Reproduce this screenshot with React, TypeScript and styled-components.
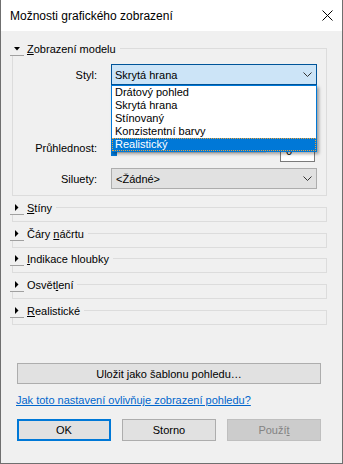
import React from "react";
import styled, { createGlobalStyle } from "styled-components";

const GlobalStyle = createGlobalStyle`
	html,
	body {
		margin: 0;
		padding: 0;
		background: #f0f0f0;
	}
	body {
		font-family: "Liberation Sans", Arial, sans-serif;
	}
`;

const Window = styled.div`
	width: 343px;
	height: 464px;
	box-sizing: border-box;
	border: 1px solid #6f6f6f;
	border-top: none;
	background: #f0f0f0;
	display: flex;
	flex-direction: column;
	font-size: 11px;
	color: #000;
`;

const TitleBar = styled.div`
	height: 31px;
	flex-shrink: 0;
	background: #fff;
	display: flex;
	align-items: center;
	justify-content: space-between;
	padding: 0 9px 0 9px;
	font-size: 12px;
`;

const Body = styled.div`
	flex: 1;
	display: flex;
	flex-direction: column;
	padding: 9px 15px 0 9px;
`;

const Sections = styled.div`
	display: flex;
	flex-direction: column;
	gap: 2.75px;
`;

const HeaderRow = styled.div`
	display: flex;
	height: 16px;
	align-items: stretch;
`;

const Toggle = styled.div`
	width: 14px;
	box-sizing: border-box;
	border-bottom: 1px solid #a0a0a0;
	display: flex;
	align-items: center;
	justify-content: center;
	padding-top: 2px;
`;

const HeaderTitle = styled.span`
	margin-left: 3px;
	line-height: 16px;
	padding-top: 1px;
	white-space: nowrap;
`;

const Rule = styled.div`
	flex: 1;
	margin-left: 4px;
	align-self: flex-end;
	height: 8px;
	box-sizing: border-box;
	border-top: 1px solid #dcdcdc;
	border-right: 1px solid #dcdcdc;
`;

const Frame = styled.div<{ $open?: boolean }>`
	margin-left: 2px;
	border: 1px solid #dcdcdc;
	border-top: none;
	height: ${(p) => (p.$open ? "auto" : "6px")};
`;

const Fields = styled.div`
	display: flex;
	flex-direction: column;
	padding: 8px 0 6px 0;
`;

const Row = styled.div<{ $gap?: number }>`
	display: grid;
	grid-template-columns: 84px 206px;
	column-gap: 14px;
	height: 21px;
	align-items: center;
	margin-top: ${(p) => p.$gap ?? 0}px;
`;

const Label = styled.div<{ $top?: boolean }>`
	text-align: right;
	line-height: 14px;
	align-self: ${(p) => (p.$top ? "start" : "center")};
`;

const ComboWrap = styled.div`
	position: relative;
	height: 21px;
`;

const Combo = styled.div<{ $active?: boolean }>`
	height: 21px;
	box-sizing: border-box;
	border: 1px solid ${(p) => (p.$active ? "#005499" : "#adadad")};
	background: ${(p) => (p.$active ? "#cce4f7" : "#e1e1e1")};
	display: flex;
	align-items: center;
	justify-content: space-between;
	padding: 0 4px 0 ${(p) => (p.$active ? 3 : 4)}px;
`;

const ListBox = styled.div`
	position: absolute;
	top: 100%;
	left: 0;
	width: 206px;
	box-sizing: border-box;
	border: 1px solid #0078d7;
	background: #fff;
	box-shadow: 2px 2px 3px rgba(0, 0, 0, 0.35);
	z-index: 10;
`;

const ListItem = styled.div<{ $selected?: boolean }>`
	height: 13px;
	line-height: 13px;
	padding-left: 3px;
	white-space: nowrap;
	background: ${(p) => (p.$selected ? "#0078d7" : "transparent")};
	color: ${(p) => (p.$selected ? "#fff" : "#000")};
	outline: ${(p) => (p.$selected ? "1px dotted #e9a23b" : "none")};
	outline-offset: -1px;
`;

const SliderCell = styled.div`
	display: flex;
	align-items: center;
	height: 21px;
`;

const Track = styled.div`
	flex: 1;
	height: 21px;
	display: flex;
	align-items: flex-start;
	background: linear-gradient(#d6d6d6, #d6d6d6) no-repeat 4px 10px / calc(100% - 8px) 2px;
`;

const Thumb = styled.div`
	width: 6px;
	height: 16px;
	margin-top: -1px;
	background: #0078d7;
`;

const NumberBox = styled.div`
	width: 35px;
	height: 21px;
	box-sizing: border-box;
	margin: 0 2px 0 10px;
	border: 1px solid #7a7a7a;
	background: #fff;
	padding-left: 5px;
	line-height: 19px;
`;

const SaveButton = styled.div`
	margin: 38.5px 0 0 7px;
	width: 304px;
	height: 21px;
	box-sizing: border-box;
	border: 1px solid #adadad;
	background: #e1e1e1;
	display: flex;
	align-items: center;
	justify-content: center;
`;

const HelpLink = styled.a`
	margin: 8px 0 0 6px;
	line-height: 16px;
	color: #0066cc;
	text-decoration: underline;
	align-self: flex-start;
`;

const ButtonRow = styled.div`
	display: flex;
	gap: 11px;
	margin: 11px 0 0 7px;
`;

const DialogButton = styled.div<{ $variant?: "default" | "disabled" }>`
	width: 94px;
	height: 22px;
	box-sizing: border-box;
	display: flex;
	align-items: center;
	justify-content: center;
	background: ${(p) => (p.$variant === "disabled" ? "#cccccc" : "#e1e1e1")};
	color: ${(p) => (p.$variant === "disabled" ? "#838383" : "#000")};
	border: ${(p) =>
		p.$variant === "default"
			? "2px solid #0078d7"
			: p.$variant === "disabled"
			? "1px solid #bfbfbf"
			: "1px solid #adadad"};
`;

const Chevron = () => (
	<svg width="9" height="5" viewBox="0 0 9 5">
		<polyline points="0.5,0.5 4.5,4.5 8.5,0.5" fill="none" stroke="#333" strokeWidth="1" />
	</svg>
);

const Arrow = ({ open }: { open: boolean }) =>
	open ? (
		<svg width="6" height="4" viewBox="0 0 6 4">
			<polygon points="0,0 6,0 3,3.5" fill="#000" />
		</svg>
	) : (
		<svg width="4" height="7" viewBox="0 0 4 7">
			<polygon points="0,0 3.5,3.5 0,7" fill="#000" />
		</svg>
	);

interface SectionProps {
	title: React.ReactNode;
	open?: boolean;
	children?: React.ReactNode;
}

function Section({ title, open = false, children }: SectionProps) {
	return (
		<div>
			<HeaderRow>
				<Toggle>
					<Arrow open={open} />
				</Toggle>
				<HeaderTitle>{title}</HeaderTitle>
				<Rule />
			</HeaderRow>
			<Frame $open={open}>{children}</Frame>
		</div>
	);
}

const styles = ["Drátový pohled", "Skrytá hrana", "Stínovaný", "Konzistentní barvy", "Realistický"];

export default function App() {
	return (
		<>
			<GlobalStyle />
			<Window>
				<TitleBar>
					<span>Možnosti grafického zobrazení</span>
					<svg width="11" height="11" viewBox="0 0 11 11">
						<path d="M0.5 0.5 L10.5 10.5 M10.5 0.5 L0.5 10.5" stroke="#000" strokeWidth="1" />
					</svg>
				</TitleBar>
				<Body>
					<Sections>
						<Section
							open
							title={
								<>
									<u>Z</u>obrazení modelu
								</>
							}
						>
							<Fields>
								<Row>
									<Label>Styl:</Label>
									<ComboWrap>
										<Combo $active>
											<span>Skrytá hrana</span>
											<Chevron />
										</Combo>
										<ListBox>
											{styles.map((s, i) => (
												<ListItem key={s} $selected={i === styles.length - 1}>
													{s}
												</ListItem>
											))}
										</ListBox>
									</ComboWrap>
								</Row>
								<Row $gap={56}>
									<Label $top>Průhlednost:</Label>
									<SliderCell>
										<Track>
											<Thumb />
										</Track>
										<NumberBox>0</NumberBox>
									</SliderCell>
								</Row>
								<Row $gap={6}>
									<Label>Siluety:</Label>
									<Combo>
										<span>&lt;Žádné&gt;</span>
										<Chevron />
									</Combo>
								</Row>
							</Fields>
						</Section>
						<Section
							title={
								<>
									<u>S</u>tíny
								</>
							}
						/>
						<Section
							title={
								<>
									Čáry <u>n</u>áčrtu
								</>
							}
						/>
						<Section
							title={
								<>
									<u>I</u>ndikace hloubky
								</>
							}
						/>
						<Section
							title={
								<>
									Osvět<u>l</u>ení
								</>
							}
						/>
						<Section
							title={
								<>
									<u>R</u>ealistické
								</>
							}
						/>
					</Sections>
					<SaveButton>Uložit jako šablonu pohledu…</SaveButton>
					<HelpLink href="#">Jak toto nastavení ovlivňuje zobrazení pohledu?</HelpLink>
					<ButtonRow>
						<DialogButton $variant="default">OK</DialogButton>
						<DialogButton>Storno</DialogButton>
						<DialogButton $variant="disabled">
							Použí<u>t</u>
						</DialogButton>
					</ButtonRow>
				</Body>
			</Window>
		</>
	);
}
